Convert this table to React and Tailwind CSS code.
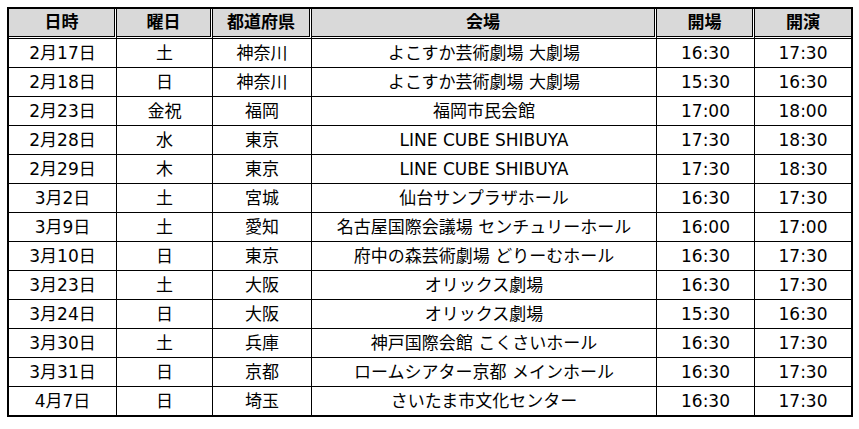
import React from 'react';

const rows = [
  ["2月17日", "土", "神奈川", "よこすか芸術劇場 大劇場", "16:30", "17:30"],
  ["2月18日", "日", "神奈川", "よこすか芸術劇場 大劇場", "15:30", "16:30"],
  ["2月23日", "金祝", "福岡", "福岡市民会館", "17:00", "18:00"],
  ["2月28日", "水", "東京", "LINE CUBE SHIBUYA", "17:30", "18:30"],
  ["2月29日", "木", "東京", "LINE CUBE SHIBUYA", "17:30", "18:30"],
  ["3月2日", "土", "宮城", "仙台サンプラザホール", "16:30", "17:30"],
  ["3月9日", "土", "愛知", "名古屋国際会議場 センチュリーホール", "16:00", "17:00"],
  ["3月10日", "日", "東京", "府中の森芸術劇場 どりーむホール", "16:30", "17:30"],
  ["3月23日", "土", "大阪", "オリックス劇場", "16:30", "17:30"],
  ["3月24日", "日", "大阪", "オリックス劇場", "15:30", "16:30"],
  ["3月30日", "土", "兵庫", "神戸国際会館 こくさいホール", "16:30", "17:30"],
  ["3月31日", "日", "京都", "ロームシアター京都 メインホール", "16:30", "17:30"],
  ["4月7日", "日", "埼玉", "さいたま市文化センター", "16:30", "17:30"],
];

const headers = ["日時", "曜日", "都道府県", "会場", "開場", "開演"];

const cols = "grid grid-cols-[108px_96px_99px_345px_98px_96px]";

const App = () => {
  return (
    <div
      className="w-[859px] h-[429px] bg-white pt-[7px] pl-[7px] text-black text-[17px] leading-none"
      style={{ fontFamily: '"DejaVu Sans", "Noto Sans CJK JP", sans-serif' }}
    >
      <div className="w-[846px] border-2 border-black">
        {/* header */}
        <div className={cols}>
          {headers.map((h, i) => (
            <div
              key={i}
              className={
                "h-[30px] flex items-center justify-center font-bold bg-[#d9d9d9] bg-clip-padding border-black border-double border-b-[3px] " +
                (i < headers.length - 1 ? "border-r-[3px]" : "")
              }
            >
              {h}
            </div>
          ))}
        </div>

        {/* schedule rows */}
        {rows.map((r, ri) => (
          <div
            key={ri}
            className={
              cols +
              " " +
              (ri < rows.length - 1 ? "h-[29px] border-b border-black" : "h-[28px]")
            }
          >
            {r.map((c, ci) => (
              <div
                key={ci}
                className={
                  "flex items-center justify-center whitespace-nowrap " +
                  (ci < r.length - 1 ? "border-r border-black" : "")
                }
              >
                {c}
              </div>
            ))}
          </div>
        ))}
      </div>
    </div>
  );
};

export default App;
